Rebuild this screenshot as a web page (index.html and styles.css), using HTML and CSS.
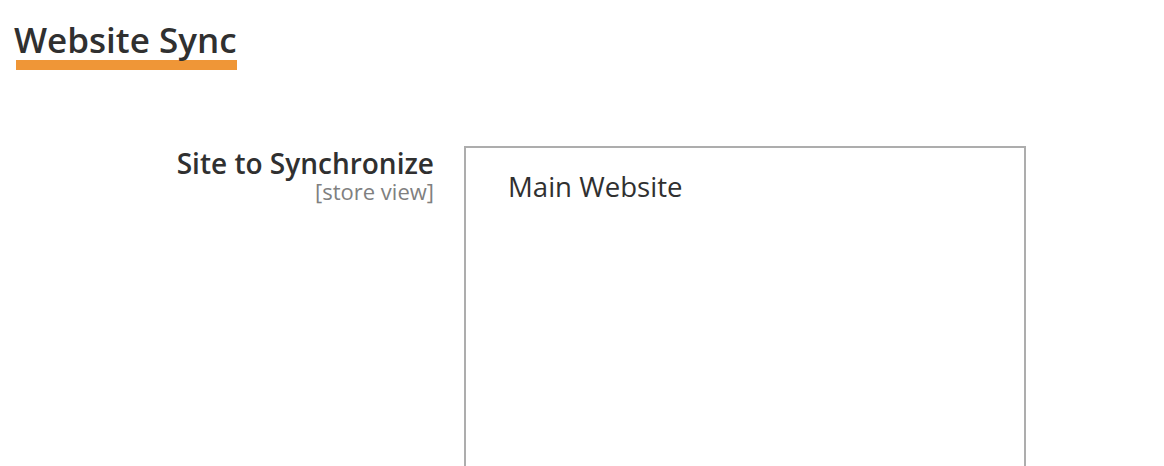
FILE: index.html
```html
<!DOCTYPE html>
<html lang="en">
<head>
    <meta charset="UTF-8">
    <title>Website Sync</title>
    <link rel="stylesheet" href="styles.css">
</head>
<body>
    <div class="page">
        <h1 class="page-title">Website Sync</h1>
        <div class="field">
            <div class="label">
                <div class="label-text">Site to Synchronize</div>
                <div class="scope">[store view]</div>
            </div>
            <div class="control">
                <div class="multiselect">
                    <div class="option">Main Website</div>
                </div>
            </div>
        </div>
    </div>
</body>
</html>
```

FILE: styles.css
```css
body {
    margin: 0;
    padding: 0;
    font-family: "Open Sans", "Noto Sans", sans-serif;
    color: #303030;
    background: #fff;
}
.page {
    padding: 19px 0 0 14px;
}
.page-title {
    display: inline-block;
    margin: 0;
    font-size: 35px;
    font-weight: 600;
    line-height: 41px;
    color: #303030;
}
/* orange underline */
.page-title::after {
    content: "";
    display: block;
    height: 10px;
    margin: 0 0 0 2px;
    background: #ef9637;
}
.field {
    display: flex;
    margin-top: 76px;
}
.label {
    width: 420px;
    text-align: right;
}
.label-text {
    font-size: 28px;
    font-weight: 600;
    line-height: 34px;
}
.scope {
    font-size: 22px;
    line-height: 23px;
    color: #808080;
}
.control {
    margin-left: 30px;
}
.multiselect {
    width: 558px;
    height: 400px;
    border: 2px solid #adadad;
}
.option {
    padding: 21px 0 0 42px;
    font-size: 27.6px;
    line-height: 34px;
}
```
